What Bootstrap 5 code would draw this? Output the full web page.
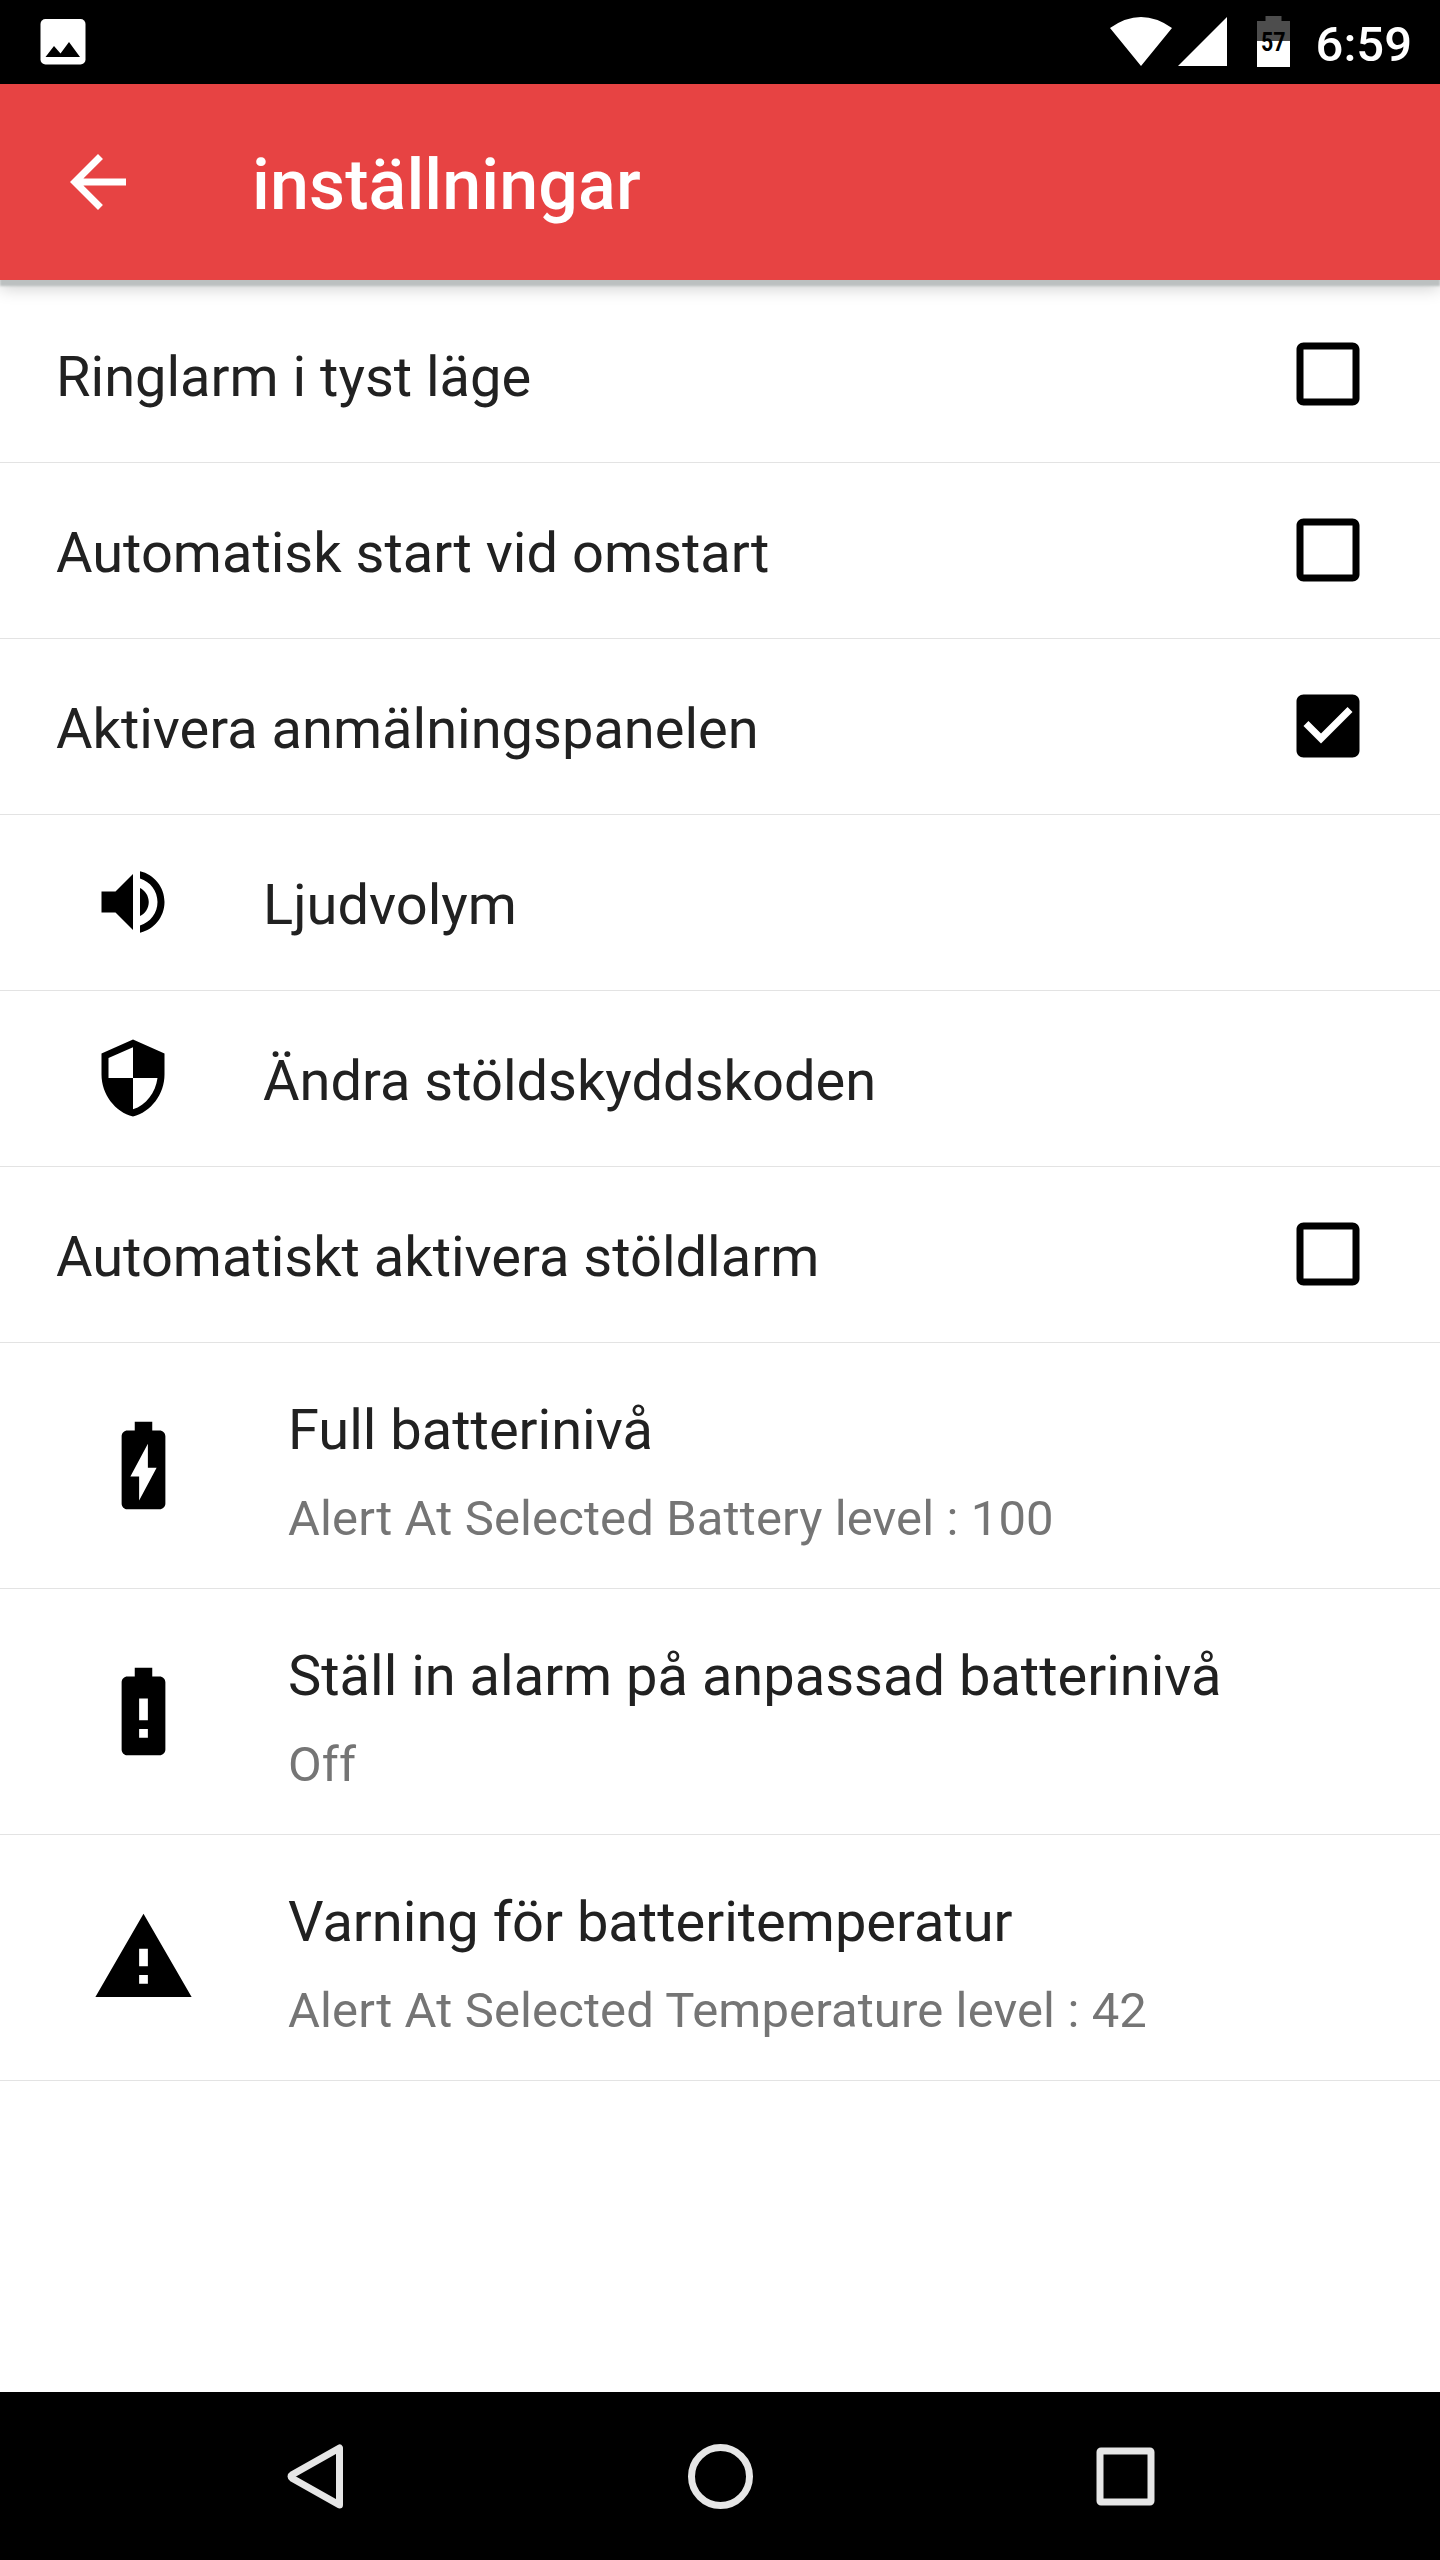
<!DOCTYPE html>
<html lang="sv">
<head>
<meta charset="utf-8">
<meta name="viewport" content="width=device-width, initial-scale=1">
<title>inställningar</title>
<link rel="stylesheet" href="https://cdn.jsdelivr.net/npm/bootstrap@5.3.0/dist/css/bootstrap.min.css">
<style>
body{font-family:Roboto,"Liberation Sans",sans-serif;color:#212121}
.screen{width:1440px;height:2560px;background:#fff}
.status-bar{height:84px;padding:0 28px 0 35px}
.clock{font-size:49px;font-weight:500;line-height:84px;padding-top:5px}
.app-bar{height:196px;background:#e74343;padding-left:56px;box-shadow:0 6px 2px #bcc0c0,0 8px 16px rgba(0,0,0,.2);z-index:1}
.app-title{font-size:70px;font-weight:500;line-height:84px;margin-left:112px;padding-top:6px;letter-spacing:.1px}
.settings{padding-top:7px}
.settings .setting{border:0;border-bottom:1px solid #e3e3e3;border-radius:0;color:#212121;padding:0 70px 0 56px;height:176px;background:transparent}
.settings.list-group-flush > .setting:last-child{border-bottom-width:1px}
.settings .setting-icon{padding-left:91px}
.settings .setting-tall{height:246px}
.label-main{font-size:56px;line-height:66px;padding-top:4px}
.label-sub{font-size:49px;line-height:58px;color:#757575;margin-top:27px;letter-spacing:.12px}
.setting-tall .d-flex{padding-top:10px}
.setting svg{fill:#000;margin-bottom:2px}
.setting-tall svg{margin-bottom:1px}
.gap-s{gap:88px}
.gap-l{gap:92px}
.nav-keys{height:168px}
svg{display:block;flex:none}
</style>
<script src="https://cdn.jsdelivr.net/npm/bootstrap@5.3.0/dist/js/bootstrap.bundle.min.js"></script>
</head>
<body>
<div class="screen d-flex flex-column overflow-hidden">
  <div class="status-bar bg-black text-white d-flex align-items-center justify-content-between">
    <svg width="56" height="84" viewBox="0 0 56 84"><rect x="5.500" y="19" width="45" height="45.500" rx="5" fill="#fff"/><path d="M10.500 57L19 46l6.500 7.500L34 42l11 15z"/></svg>
    <div class="d-flex align-items-center">
      <svg width="206" height="84" viewBox="1110 0 206 84"><path fill="#fff" d="M1110 28Q1141 6 1172 28L1141 66zM1178 66L1227 17V66z"/><path fill="#4d4d4d" d="M1257 41V21h8.500v-5h16v5h8.500v20z"/><path fill="#fff" d="M1257 41h33v26h-33z"/><text x="1261" y="51" font-family="Roboto" font-size="25" font-weight="700" textLength="24.500" lengthAdjust="spacingAndGlyphs">57</text></svg>
      <span class="clock">6:59</span>
    </div>
  </div>
  <header class="app-bar text-white d-flex align-items-center position-relative">
    <svg width="84" height="84" viewBox="0 0 24 24" fill="#fff"><path d="M20 11H7.830l5.590-5.590L12 4l-8 8 8 8 1.410-1.410L7.830 13H20v-2z"/></svg>
    <span class="app-title">inställningar</span>
  </header>
  <main class="settings list-group list-group-flush flex-grow-1">
    <div class="list-group-item setting d-flex align-items-center justify-content-between"><span class="label-main">Ringlarm i tyst läge</span><svg width="84" height="84" viewBox="0 0 24 24"><path d="M19 5v14H5V5h14m0-2H5c-1.100 0-2 .9-2 2v14c0 1.100.9 2 2 2h14c1.100 0 2-.9 2-2V5c0-1.100-.9-2-2-2z"/></svg></div>
    <div class="list-group-item setting d-flex align-items-center justify-content-between"><span class="label-main">Automatisk start vid omstart</span><svg width="84" height="84" viewBox="0 0 24 24"><path d="M19 5v14H5V5h14m0-2H5c-1.100 0-2 .9-2 2v14c0 1.100.9 2 2 2h14c1.100 0 2-.9 2-2V5c0-1.100-.9-2-2-2z"/></svg></div>
    <div class="list-group-item setting d-flex align-items-center justify-content-between"><span class="label-main">Aktivera anmälningspanelen</span><svg width="84" height="84" viewBox="0 0 24 24"><path d="M19 3H5c-1.110 0-2 .9-2 2v14c0 1.100.89 2 2 2h14c1.110 0 2-.9 2-2V5c0-1.100-.89-2-2-2zm-9 14l-5-5 1.410-1.410L10 14.170l7.590-7.590L19 8l-9 9z"/></svg></div>
    <div class="list-group-item setting setting-icon d-flex align-items-center gap-s"><svg width="84" height="84" viewBox="0 0 24 24"><path d="M3 9v6h4l5 5V4L7 9H3zm13.500 3c0-1.770-1.020-3.290-2.500-4.030v8.050c1.480-.73 2.500-2.250 2.500-4.020zM14 3.230v2.060c2.890.86 5 3.540 5 6.710s-2.110 5.850-5 6.710v2.060c4.010-.91 7-4.490 7-8.770s-2.990-7.860-7-8.770z"/></svg><span class="label-main">Ljudvolym</span></div>
    <div class="list-group-item setting setting-icon d-flex align-items-center gap-s"><svg width="84" height="84" viewBox="0 0 24 24"><path d="M12 1L3 5v6c0 5.550 3.840 10.740 9 12 5.160-1.260 9-6.450 9-12V5l-9-4zm0 10.990h7c-.53 4.120-3.280 7.790-7 8.940V12H5V6.300l7-3.110v8.800z"/></svg><span class="label-main">Ändra stöldskyddskoden</span></div>
    <div class="list-group-item setting d-flex align-items-center justify-content-between"><span class="label-main">Automatiskt aktivera stöldlarm</span><svg width="84" height="84" viewBox="0 0 24 24"><path d="M19 5v14H5V5h14m0-2H5c-1.100 0-2 .9-2 2v14c0 1.100.9 2 2 2h14c1.100 0 2-.9 2-2V5c0-1.100-.9-2-2-2z"/></svg></div>
    <div class="list-group-item setting setting-icon setting-tall d-flex align-items-center gap-l"><svg width="105" height="105" viewBox="0 0 24 24"><path d="M15.670 4H14V2h-4v2H8.330C7.600 4 7 4.600 7 5.330v15.330C7 21.400 7.600 22 8.330 22h7.330c.74 0 1.340-.6 1.340-1.330V5.330C17 4.600 16.400 4 15.670 4zM11 20v-5.500H9L13 7v5.500h2L11 20z"/></svg><div class="d-flex flex-column"><span class="label-main">Full batterinivå</span><span class="label-sub">Alert At Selected Battery level : 100</span></div></div>
    <div class="list-group-item setting setting-icon setting-tall d-flex align-items-center gap-l"><svg width="105" height="105" viewBox="0 0 24 24"><path d="M15.670 4H14V2h-4v2H8.330C7.600 4 7 4.600 7 5.330v15.330C7 21.400 7.600 22 8.330 22h7.330c.74 0 1.340-.6 1.340-1.330V5.330C17 4.600 16.400 4 15.670 4zM13 18h-2v-2h2v2zm0-4h-2V9h2v5z"/></svg><div class="d-flex flex-column"><span class="label-main">Ställ in alarm på anpassad batterinivå</span><span class="label-sub">Off</span></div></div>
    <div class="list-group-item setting setting-icon setting-tall d-flex align-items-center gap-l"><svg width="105" height="105" viewBox="0 0 24 24"><path d="M1 21h22L12 2 1 21zm12-3h-2v-2h2v2zm0-4h-2v-4h2v4z"/></svg><div class="d-flex flex-column"><span class="label-main">Varning för batteritemperatur</span><span class="label-sub">Alert At Selected Temperature level : 42</span></div></div>
  </main>
  <nav class="nav-keys bg-black d-flex align-items-center justify-content-center">
    <svg width="1440" height="168" viewBox="0 0 1440 168" fill="none" stroke="#e6e6e6" stroke-width="7" stroke-linejoin="round"><path d="M339.500 56V113L292.500 86.500Q289.500 84.500 292.500 82.500z"/><circle cx="720.500" cy="84.500" r="29"/><rect x="1100" y="59" width="51" height="51" rx="1"/></svg>
  </nav>
</div>
</body>
</html>
